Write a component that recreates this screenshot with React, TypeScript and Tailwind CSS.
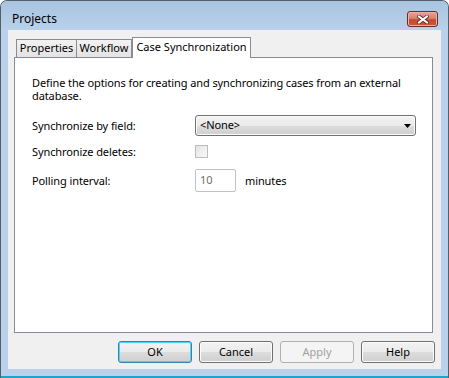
import React from "react";

function Btn({
  label,
  variant = "normal",
}: {
  label: string;
  variant?: "normal" | "default" | "disabled";
}) {
  if (variant === "disabled") {
    return (
      <div className="w-[74px] h-[22px] rounded-[3px] border border-[#adb2b5] bg-[#f4f4f4] flex items-center justify-center text-[#a0a0a0]">
        {label}
      </div>
    );
  }
  const border =
    variant === "default" ? "border-[#3c7fb1]" : "border-[#707070]";
  const ring =
    variant === "default"
      ? "shadow-[inset_0_0_0_1px_#48d4f4]"
      : "shadow-[inset_0_0_0_1px_#fcfcfc]";
  return (
    <div
      className={`w-[74px] h-[22px] rounded-[3px] border ${border} ${ring} bg-[linear-gradient(#f2f2f2_0%,#ebebeb_50%,#dddddd_50%,#cfcfcf_100%)] flex items-center justify-center text-black`}
    >
      {label}
    </div>
  );
}

export default function App() {
  return (
    <div className="w-[449px] h-[378px] flex flex-col bg-[#b9d1ea] rounded-t-[7px] border-t border-x border-[#555f6b] font-['Noto_Sans',sans-serif] text-[11px] text-black overflow-hidden">
      {/* title bar */}
      <div className="h-[29px] flex items-start pl-[11px] pr-[10px] bg-[linear-gradient(#a9c4e1,#b9d1ea)]">
        <span className="mt-[10px] text-[12px] leading-[16px]">Projects</span>
        <div className="ml-auto mt-[10px] w-[31px] h-[16px] rounded-[3px] border border-[#6e2a20] shadow-[inset_0_0_0_1px_#e9b3a6] bg-[linear-gradient(#e8a493_0%,#d9826f_45%,#c34a33_55%,#c8583c_100%)] flex items-center justify-center">
          <svg width="12" height="9" viewBox="0 0 12 9">
            <path
              d="M2 1.5 L10 7.5 M10 1.5 L2 7.5"
              stroke="#5a2a22"
              strokeWidth="3.6"
              strokeLinecap="square"
            />
            <path
              d="M2 1.5 L10 7.5 M10 1.5 L2 7.5"
              stroke="#ffffff"
              strokeWidth="2"
              strokeLinecap="square"
            />
          </svg>
        </div>
      </div>

      {/* client area */}
      <div className="h-[339px] mx-[7px] bg-[#f0f0f0] flex flex-col pt-[7px] pl-[6px] pr-[8px]">
        {/* tabs */}
        <div className="h-[20px] flex items-end pl-[2px] relative z-10">
          <div className="w-[61px] h-[18px] border border-b-0 border-[#898c95] bg-[linear-gradient(#f2f2f2,#e3e3e3)] flex items-center justify-center">
            Properties
          </div>
          <div className="w-[55px] h-[18px] border border-b-0 border-l-0 border-[#898c95] bg-[linear-gradient(#f2f2f2,#e3e3e3)] flex items-center justify-center">
            Workflow
          </div>
          <div className="w-[119px] h-[21px] -mb-[1px] border border-b-0 border-[#898c95] bg-white flex items-start justify-center pt-[1px]">
            Case Synchronization
          </div>
        </div>

        {/* panel */}
        <div className="h-[276px] border border-[#898c95] bg-white pl-[17px] pt-[18px] tracking-[-0.1px]">
          <p className="leading-[13px] w-[380px]">
            Define the options for creating and synchronizing cases from an
            external database.
          </p>

          <div className="mt-[13px] flex items-center">
            <span className="w-[163px] leading-[13px]">Synchronize by field:</span>
            <div className="w-[221px] h-[21px] rounded-[3px] border border-[#707070] shadow-[inset_0_0_0_1px_#fcfcfc] bg-[linear-gradient(#f2f2f2_0%,#ebebeb_50%,#dddddd_50%,#cfcfcf_100%)] flex items-center pl-[4px] pr-[4px]">
              <span>&lt;None&gt;</span>
              <svg className="ml-auto" width="7" height="4" viewBox="0 0 7 4">
                <path d="M0 0 H7 L3.5 4 Z" fill="#000" />
              </svg>
            </div>
          </div>

          <div className="mt-[9px] h-[13px] flex items-center">
            <span className="w-[163px] leading-[13px]">Synchronize deletes:</span>
            <div className="w-[13px] h-[13px] border border-[#bcbcbc] bg-[linear-gradient(135deg,#e4e4e4,#f9f9f9)]" />
          </div>

          <div className="mt-[11px] h-[23px] flex items-center">
            <span className="w-[163px] leading-[13px]">Polling interval:</span>
            <div className="w-[41px] h-[23px] rounded-[2px] border border-[#c2c2c2] bg-white flex items-center pl-[4px] text-[#6d6d6d]">
              10
            </div>
            <span className="ml-[9px] leading-[13px]">minutes</span>
          </div>
        </div>

        {/* buttons */}
        <div className="mt-[8px] flex justify-end gap-[7px] -mr-[2px]">
          <Btn label="OK" variant="default" />
          <Btn label="Cancel" />
          <Btn label="Apply" variant="disabled" />
          <Btn label="Help" />
        </div>
      </div>

      <div className="flex-1" />
      <div className="h-[2px] bg-[#1ea4c6]" />
    </div>
  );
}
